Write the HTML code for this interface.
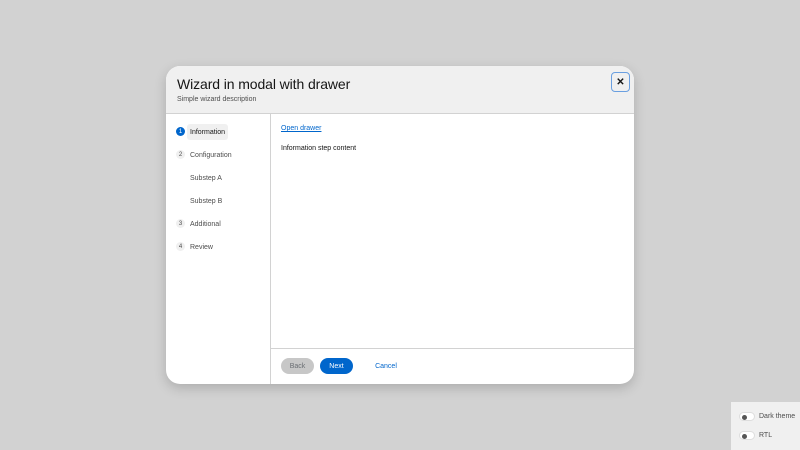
<!DOCTYPE html>
<html><head><meta charset="utf-8"><style>
*{box-sizing:border-box;margin:0;padding:0}
body{width:800px;height:450px;background:#d2d2d2;font-family:"Liberation Sans",sans-serif;position:relative;overflow:hidden;color:#151515}
.modal{position:absolute;left:166px;top:66px;width:468px;height:318px;background:#fff;border-radius:14px;overflow:hidden;box-shadow:0 4px 12px rgba(0,0,0,.18)}
.head{height:48px;background:#f0f0f0;border-bottom:1px solid #d2d2d2;position:relative}
.head h1{position:absolute;left:11px;top:10px;font-size:14px;font-weight:500;letter-spacing:-.1px}
.head p{position:absolute;left:11px;top:30px;font-size:7px;color:#4d4d4d}
.close{position:absolute;left:445px;top:6px;width:19px;height:20px;border:1.5px solid #6a9fe0;border-radius:4px;font-size:10px;font-weight:bold;display:flex;align-items:center;justify-content:center}
.side{position:absolute;left:0;top:48px;width:105px;bottom:0;border-right:1px solid #d2d2d2}
.num{position:absolute;left:10px;width:9px;height:9px;border-radius:50%;background:#f0f0f0;font-size:6px;display:flex;align-items:center;justify-content:center;color:#4d4d4d}
.num.a{background:#0066cc;color:#fff}
.lbl{position:absolute;left:21px;white-space:nowrap;padding:4px 3px 3px;line-height:9px;font-size:7px;color:#4d4d4d}
.lbl.a{background:#f0f0f0;border-radius:3px;color:#151515}
.link{position:absolute;left:115px;top:59px;font-size:7px;color:#0066cc;text-decoration:underline}
.txt{position:absolute;left:115px;top:79px;font-size:7px}
.foot{position:absolute;left:105px;right:0;top:282px;border-top:1px solid #d2d2d2;height:36px}
.btn{position:absolute;top:9px;height:16px;border-radius:8px;font-size:7px;display:flex;align-items:center;justify-content:center;padding-top:1px}
.tg{position:absolute;left:8px;width:16px;height:9px;border-radius:5px;background:#fff;border:1px solid #ddd}
.tg i{position:absolute;left:2px;top:1.5px;width:5px;height:5px;border-radius:50%;background:#555}
.tl{position:absolute;left:28px;font-size:7px;color:#4d4d4d}
</style></head><body>
<div class="modal">
<div class="head"><h1>Wizard in modal with drawer</h1><p>Simple wizard description</p><div class="close">✕</div></div>
<div class="side">
<div class="num a" style="top:13px">1</div><div class="lbl a" style="top:10px">Information</div>
<div class="num" style="top:36px">2</div><div class="lbl" style="top:33px">Configuration</div>
<div class="lbl" style="top:56px">Substep A</div>
<div class="lbl" style="top:79px">Substep B</div>
<div class="num" style="top:105px">3</div><div class="lbl" style="top:102px">Additional</div>
<div class="num" style="top:128px">4</div><div class="lbl" style="top:125px">Review</div>
</div>
<div class="link">Open drawer</div>
<div class="txt">Information step content</div>
<div class="foot">
<div class="btn" style="left:10px;width:33px;background:#c7c7c7;color:#6a6e73">Back</div>
<div class="btn" style="left:49px;width:33px;background:#0066cc;color:#fff">Next</div>
<div class="btn" style="left:100px;width:30px;color:#0066cc">Cancel</div>
</div>
</div>
<div style="position:absolute;left:731px;top:402px;width:69px;height:48px;background:#f0f0f0">
<div class="tg" style="top:10px"><i></i></div><div class="tl" style="top:11px">Dark theme</div>
<div class="tg" style="top:29px"><i></i></div><div class="tl" style="top:30px">RTL</div>
</div>
</body></html>
